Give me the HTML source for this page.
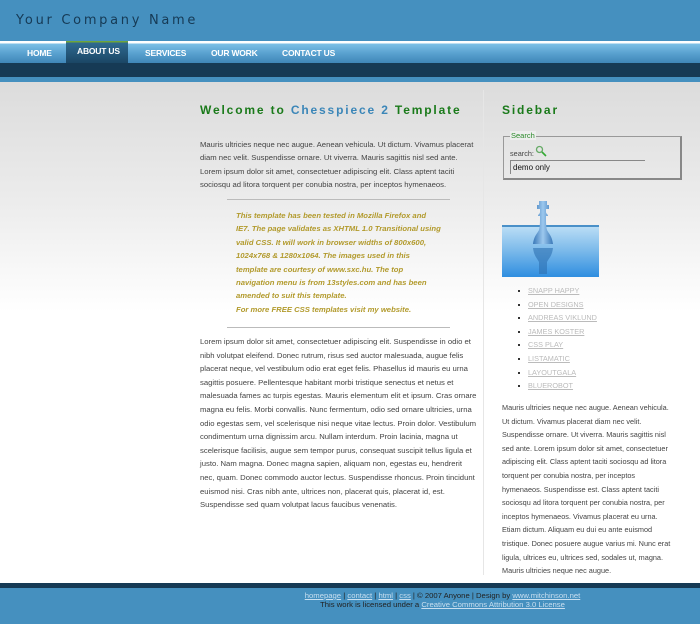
<!DOCTYPE html>
<html><head><meta charset="utf-8"><style>
*{margin:0;padding:0;box-sizing:border-box}
body{width:700px;height:624px;overflow:hidden;font-family:"Liberation Sans",sans-serif;background:#fff;position:relative}
#hdr{position:absolute;left:0;top:0;width:700px;height:41px;background:#4590bf}
#hdr h1{position:absolute;left:16px;top:13px;font-size:13px;font-weight:normal;letter-spacing:2.7px;color:#163a55;font-family:"DejaVu Sans",sans-serif}
#nav{position:absolute;left:0;top:41px;width:700px;height:22px;background:linear-gradient(#fff 0,#fff 2px,#7cc0e6 3px,#5aa2d0 12px,#3f86b8 22px)}
#nav a{position:absolute;top:7px;color:#fff;font-size:8.5px;font-weight:bold;text-decoration:none;letter-spacing:-.2px}
#nav .act{position:absolute;left:66px;top:0;width:62px;height:22px;background:linear-gradient(#6ea53a 0,#6ea53a 1px,#2f6a90 2px,#1b4665 22px)}
#dark{position:absolute;left:0;top:63px;width:700px;height:14px;background:#163a55}
#lb{position:absolute;left:0;top:77px;width:700px;height:5px;background:#4590bf}
#cont{position:absolute;left:0;top:82px;width:700px;height:501px;background:linear-gradient(#dcdcdc 0,#ececec 120px,#fff 230px,#fff)}
#div{position:absolute;left:483px;top:90px;width:1px;height:485px;background:#e6e6e6}
h2{position:absolute;font-size:12px;letter-spacing:1.85px;color:#1a7a1a;font-weight:bold;white-space:nowrap}
h2 span{color:#3b86b8}
p{position:absolute;font-size:7.7px;line-height:13.4px;color:#444;white-space:nowrap}
.q{color:#b29a2c;font-style:italic;font-weight:bold;font-size:7.7px}
.hr{position:absolute;height:1px;background:#bbb}
fieldset{position:absolute;left:503px;top:136px;width:179px;height:44px;border:1px solid #999;border-right:2px solid #888;border-bottom:2px solid #888}
.leg{position:absolute;left:510px;top:131px;font-size:7.5px;color:#2a8a2a;background:#eee;padding:0 1px}
ul{position:absolute;left:528px;top:284px;list-style:none}
li{font-size:7.3px;line-height:13.6px;color:#bbb;text-decoration:underline;position:relative;white-space:nowrap}
li:before{content:"";position:absolute;left:-10px;top:6px;width:2px;height:2px;background:#333}
#fdark{position:absolute;left:0;top:583px;width:700px;height:5px;background:#163a55}
#foot{position:absolute;left:0;top:588px;width:700px;height:36px;background:#4590bf;text-align:center;font-size:7.7px;color:#222;line-height:9px;padding-top:3px;padding-left:185px;white-space:nowrap}
#foot u{color:#c8dff0}
</style></head><body>
<div id="hdr"><h1>Your Company Name</h1></div>
<div id="nav"><div class="act"></div>
<a style="left:27px">HOME</a><a style="left:77px;top:5px">ABOUT US</a><a style="left:145px">SERVICES</a><a style="left:211px">OUR WORK</a><a style="left:282px">CONTACT US</a></div>
<div id="dark"></div><div id="lb"></div>
<div id="cont"></div><div id="div"></div>
<h2 style="left:200px;top:103px">Welcome to <span>Chesspiece 2</span> Template</h2>
<h2 style="left:502px;top:103px">Sidebar</h2>
<p style="left:200px;top:138px">Mauris ultricies neque nec augue. Aenean vehicula. Ut dictum. Vivamus placerat<br>diam nec velit. Suspendisse ornare. Ut viverra. Mauris sagittis nisl sed ante.<br>Lorem ipsum dolor sit amet, consectetuer adipiscing elit. Class aptent taciti<br>sociosqu ad litora torquent per conubia nostra, per inceptos hymenaeos.</p>
<div class="hr" style="left:227px;top:199px;width:223px"></div>
<p class="q" style="left:236px;top:209px">This template has been tested in Mozilla Firefox and<br>IE7. The page validates as XHTML 1.0 Transitional using<br>valid CSS. It will work in browser widths of 800x600,<br>1024x768 &amp; 1280x1064. The images used in this<br>template are courtesy of www.sxc.hu. The top<br>navigation menu is from 13styles.com and has been<br>amended to suit this template.<br>For more FREE CSS templates visit my website.</p>
<div class="hr" style="left:227px;top:327px;width:223px"></div>
<p style="left:200px;top:335px;line-height:13.6px">Lorem ipsum dolor sit amet, consectetuer adipiscing elit. Suspendisse in odio et<br>nibh volutpat eleifend. Donec rutrum, risus sed auctor malesuada, augue felis<br>placerat neque, vel vestibulum odio erat eget felis. Phasellus id mauris eu urna<br>sagittis posuere. Pellentesque habitant morbi tristique senectus et netus et<br>malesuada fames ac turpis egestas. Mauris elementum elit et ipsum. Cras ornare<br>magna eu felis. Morbi convallis. Nunc fermentum, odio sed ornare ultricies, urna<br>odio egestas sem, vel scelerisque nisi neque vitae lectus. Proin dolor. Vestibulum<br>condimentum urna dignissim arcu. Nullam interdum. Proin lacinia, magna ut<br>scelerisque facilisis, augue sem tempor purus, consequat suscipit tellus ligula et<br>justo. Nam magna. Donec magna sapien, aliquam non, egestas eu, hendrerit<br>nec, quam. Donec commodo auctor lectus. Suspendisse rhoncus. Proin tincidunt<br>euismod nisi. Cras nibh ante, ultrices non, placerat quis, placerat id, est.<br>Suspendisse sed quam volutpat lacus faucibus venenatis.</p>
<fieldset></fieldset><div class="leg">Search</div>
<div style="position:absolute;left:510px;top:149px;font-size:7.3px;color:#444">search:</div>
<svg style="position:absolute;left:535px;top:145px" width="12" height="12"><circle cx="4.5" cy="4.5" r="3" fill="none" stroke="#6a6" stroke-width="1.3"/><line x1="7" y1="7" x2="11" y2="11" stroke="#3a3" stroke-width="1.6"/></svg>
<div style="position:absolute;left:510px;top:160px;width:135px;height:14px;border-top:1px solid #888;border-left:1px solid #888;font-size:8px;color:#111;padding-left:2px;line-height:13px">demo only</div>
<svg style="position:absolute;left:502px;top:200px" width="97" height="77">
<defs><linearGradient id="w" x1="0" y1="0" x2="0" y2="1"><stop offset="0" stop-color="#bfe0f6"/><stop offset=".5" stop-color="#7ab9ea"/><stop offset="1" stop-color="#2f8ee0"/></linearGradient>
<linearGradient id="k" x1="0" y1="0" x2="1" y2="0"><stop offset="0" stop-color="#3a78b8"/><stop offset=".5" stop-color="#9cc8ee"/><stop offset="1" stop-color="#3a78b8"/></linearGradient></defs>
<rect x="0" y="25" width="97" height="52" fill="url(#w)"/><rect x="0" y="25" width="97" height="2" fill="#4a90c8"/>
<path d="M37 1h8v4h2v4h-3v3c0 2 2 2 2 4h-2c0 6 0 10 1 14c2 4 5 6 6 14h-20c1-8 4-10 6-14c1-4 1-8 1-14h-2c0-2 2-2 2-4V9h-3V5h2z" fill="url(#k)"/>
<path d="M31 48h20c-1 8-4 10-6 14v12h-8V62c-2-4-5-6-6-14z" fill="#2d6fb0" opacity=".6"/></svg>
<ul><li>SNAPP HAPPY</li><li>OPEN DESIGNS</li><li>ANDREAS VIKLUND</li><li>JAMES KOSTER</li><li>CSS PLAY</li><li>LISTAMATIC</li><li>LAYOUTGALA</li><li>BLUEROBOT</li></ul>
<p style="left:502px;top:401px;line-height:13.6px;font-size:7.3px">Mauris ultricies neque nec augue. Aenean vehicula.<br>Ut dictum. Vivamus placerat diam nec velit.<br>Suspendisse ornare. Ut viverra. Mauris sagittis nisl<br>sed ante. Lorem ipsum dolor sit amet, consectetuer<br>adipiscing elit. Class aptent taciti sociosqu ad litora<br>torquent per conubia nostra, per inceptos<br>hymenaeos. Suspendisse est. Class aptent taciti<br>sociosqu ad litora torquent per conubia nostra, per<br>inceptos hymenaeos. Vivamus placerat eu urna.<br>Etiam dictum. Aliquam eu dui eu ante euismod<br>tristique. Donec posuere augue varius mi. Nunc erat<br>ligula, ultrices eu, ultrices sed, sodales ut, magna.<br>Mauris ultricies neque nec augue.</p>
<div id="fdark"></div>
<div id="foot"><u>homepage</u> | <u>contact</u> | <u>html</u> | <u>css</u> | © 2007 Anyone | Design by <u>www.mitchinson.net</u><br>This work is licensed under a <u>Creative Commons Attribution 3.0 License</u></div>
</body></html>
